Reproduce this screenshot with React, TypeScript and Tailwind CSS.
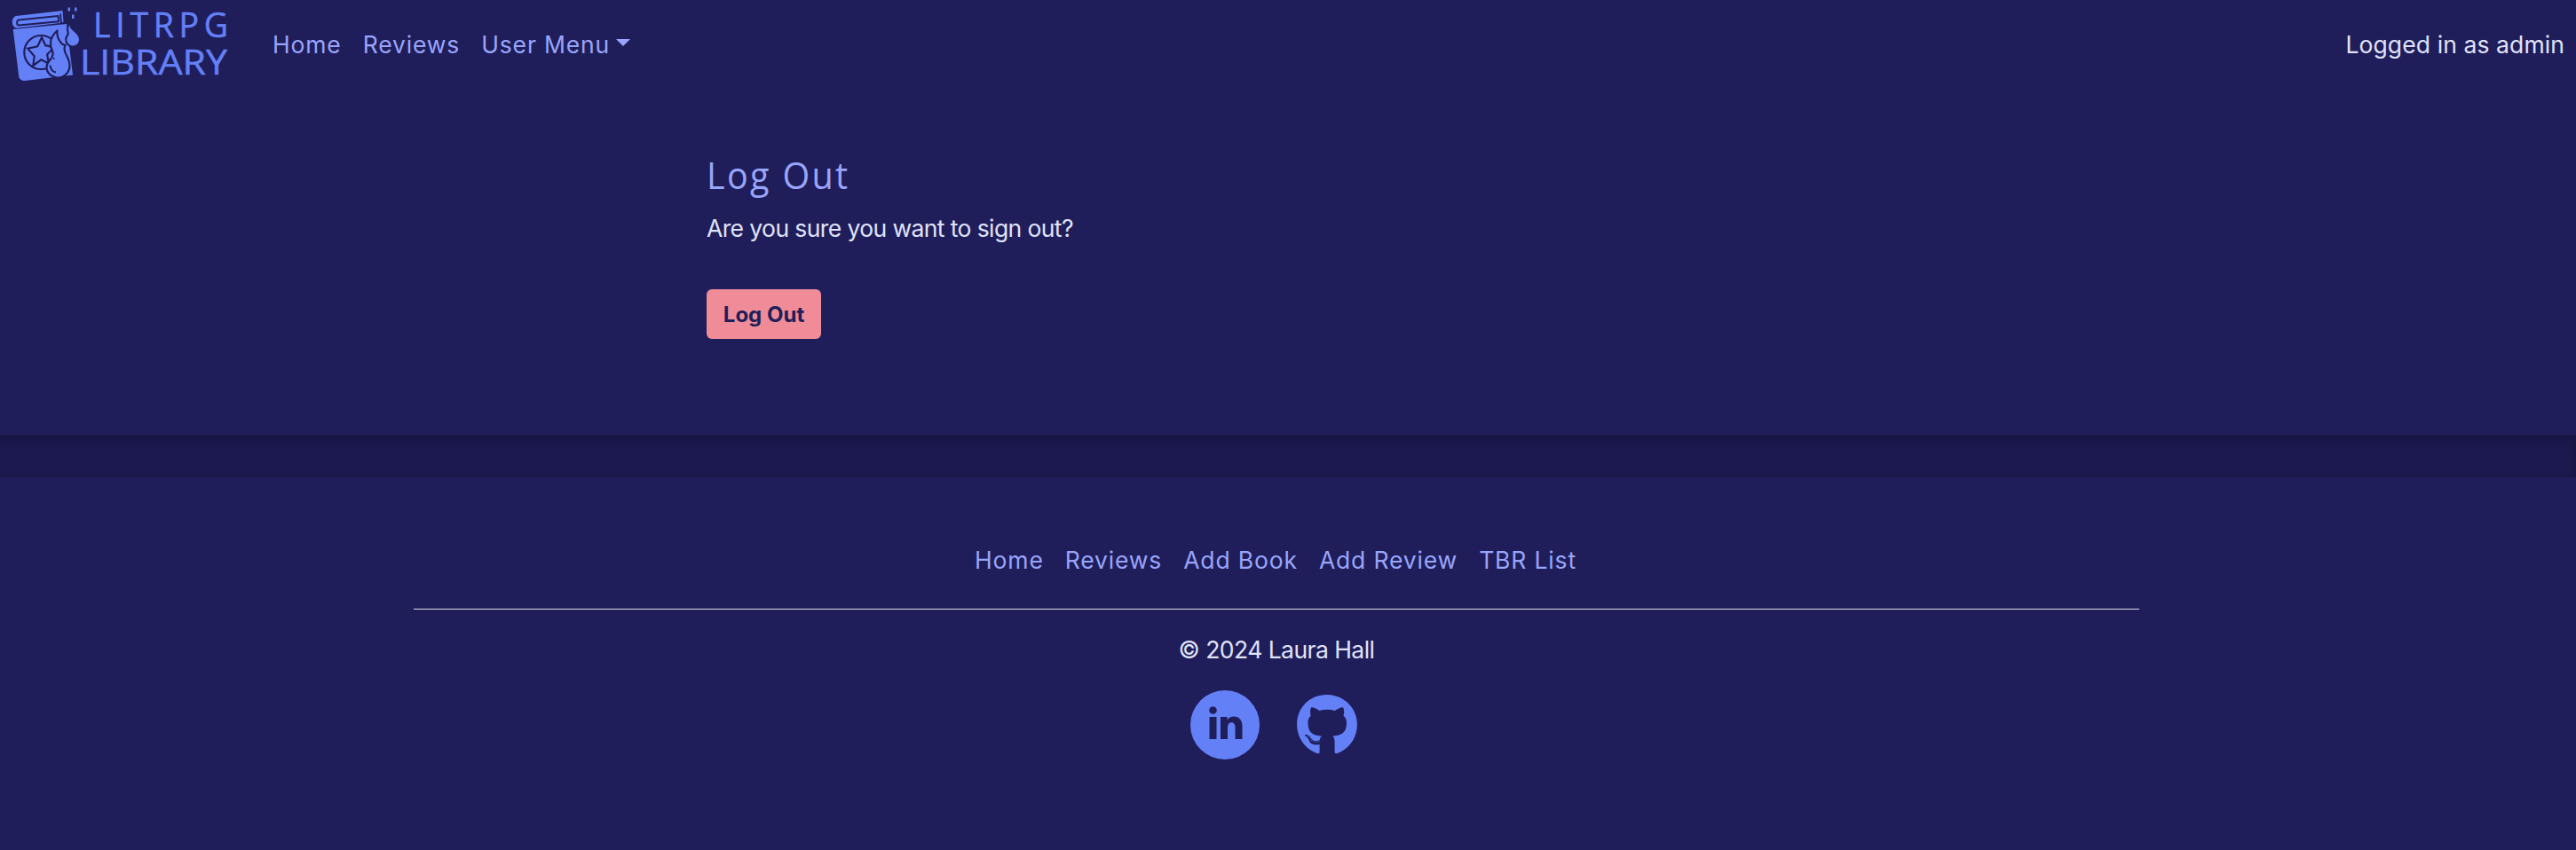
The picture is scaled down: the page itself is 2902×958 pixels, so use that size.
import { FaGithub } from "react-icons/fa";

const navLinks = ["Home", "Reviews"];
const footerLinks = ["Home", "Reviews", "Add Book", "Add Review", "TBR List"];

function Logo() {
  return (
    <svg width="260" height="96" viewBox="0 0 260 96" className="block" aria-label="LitRPG Library">
      <g fill="#6480f7">
        <path d="M18 18 70.500 12 71.500 25 67 26 20 31.500C13 32.500 11.500 20 18 18Z" />
        <path d="M14.700 33 75 27 82 84.500 28 91C24 91.300 21.500 88.500 21.200 86Z" />
        <path d="M76.500 8.500h2.500v4h-2.500ZM84 8.500h2.500v4H84ZM81 16.500h2.500v4.500H81Z" />
      </g>
      <g fill="none" stroke="#1f1e5a" strokeWidth="2.200" strokeLinejoin="round">
        <path d="M65.500 18 21 22.500c-2.500.5-2.500 6 0 6l45.200-4.300ZM68 15.500l1 10.500" strokeWidth="1.900" />
        <circle cx="46.300" cy="59" r="19" />
        <path d="m47 42.300 4.300 8.900 10 2.100-8.200 8 1.800 10.200-8.600-4.200-9 6.700 1.400-10.700-7.400-8.600 11-2.400Z" strokeLinejoin="miter" />
        <path fill="#6480f7" d="M79.700 24c-1.500 6 1 8 4 10.500 4 3.500 6.500 6 6.500 10a8 8 0 0 1-16 0c0-4 3.500-5 2.500-8-2-6 .500-9 3-12.500Z" />
        <path fill="#6480f7" d="M64.500 34.500c-.5 8 1.500 9.500 4.500 14 1.500 2.500 4 2 4.500 2-2 5-.5 8 1.500 12 2 4 3.500 7 3.500 11 0 8-6 14-13 14s-13-5-13-12c0-8 8-8 7-16-.5-4-3-5-2.500-11.500.3-5 3.500-10 7.500-13.500Z" />
        <path d="M56.500 73.500c.500 4.500 3 7.500 6.500 8M60 65.500l1.500 1" strokeWidth="2" />
      </g>
      <g fill="#6480f7" stroke="#6480f7" strokeWidth="0.5" fontFamily="Open Sans, sans-serif" fontSize="37.500">
        <text x="105" y="41.500" textLength="152">LITRPG</text>
        <text x="90" y="84" textLength="166" lengthAdjust="spacingAndGlyphs">LIBRARY</text>
      </g>
    </svg>
  );
}

function LinkedIn() {
  return (
    <svg width="78" height="78" viewBox="0 0 78 78" className="block">
      <circle cx="39" cy="39" r="39" fill="#6480f7" />
      <g fill="#1f1e5a">
        <circle cx="25.500" cy="22.500" r="4.300" />
        <path d="M21.500 30h8v25h-8ZM34 30h7.500v3.500c4-6.500 17-5.500 17 6.500v15h-8V41.500c0-7-8.500-7-8.500 0V55h-8Z" />
      </g>
    </svg>
  );
}

export default function App() {
  return (
    <div className="flex h-[958px] flex-col overflow-hidden bg-[#1f1e5a] font-['Inter',sans-serif] text-[26.5px] leading-[40px] text-[#e0e3fa]">
      <header className="flex h-[100px] items-center justify-between pr-[13px]">
        <div className="flex h-full items-center">
          <div className="h-[96px] w-[307px] self-start">
            <Logo />
          </div>
          <nav className="flex gap-[24px] tracking-[0.85px] text-[#99a5fb]">
            {navLinks.map((l) => (
              <a key={l}>{l}</a>
            ))}
            <a className="flex items-center gap-[7px]">
              User Menu
              <span className="mb-1 border-x-8 border-t-8 border-x-transparent border-t-[#99a5fb]" />
            </a>
          </nav>
        </div>
        <span className="tracking-[0.1px]">Logged in as admin</span>
      </header>
      <main className="h-[390px] pt-[72px] pl-[796px]">
        <h1 className="h-[65px] w-[300px] origin-left scale-x-[0.94] font-['Open_Sans',sans-serif] text-[42px] leading-[50px] font-medium tracking-[2.500px] text-[#99a5fb]">Log Out</h1>
        <p className="tracking-[-0.6px]">Are you sure you want to sign out?</p>
        <button className="mt-[49px] h-[56px] w-[129px] rounded-[6px] bg-[#f08c98] pt-px text-[24px] font-bold text-[#1f1e5a]">Log Out</button>
      </main>
      <div className="-ml-8 h-[48px] border-y border-[#19174a] bg-[#1c1a51] shadow-[inset_0_8px_24px_rgba(0,0,0,.1),inset_0_2px_8px_rgba(0,0,0,.15)]" />
      <footer className="ml-[466px] flex w-[1944px] flex-col items-center pt-[73px]">
        <nav className="flex h-[76px] w-full justify-center gap-[24px] border-b border-[#dcdcea] pr-[2px] tracking-[0.85px] text-[#99a5fb]">
          {footerLinks.map((l) => (
            <a key={l}>{l}</a>
          ))}
        </nav>
        <p className="mt-[25px] tracking-[-0.55px]">© 2024 Laura Hall</p>
        <div className="mt-[26px] mr-[5px] flex items-center gap-[41px]">
          <LinkedIn />
          <FaGithub size={70} color="#6480f7" />
        </div>
      </footer>
    </div>
  );
}
